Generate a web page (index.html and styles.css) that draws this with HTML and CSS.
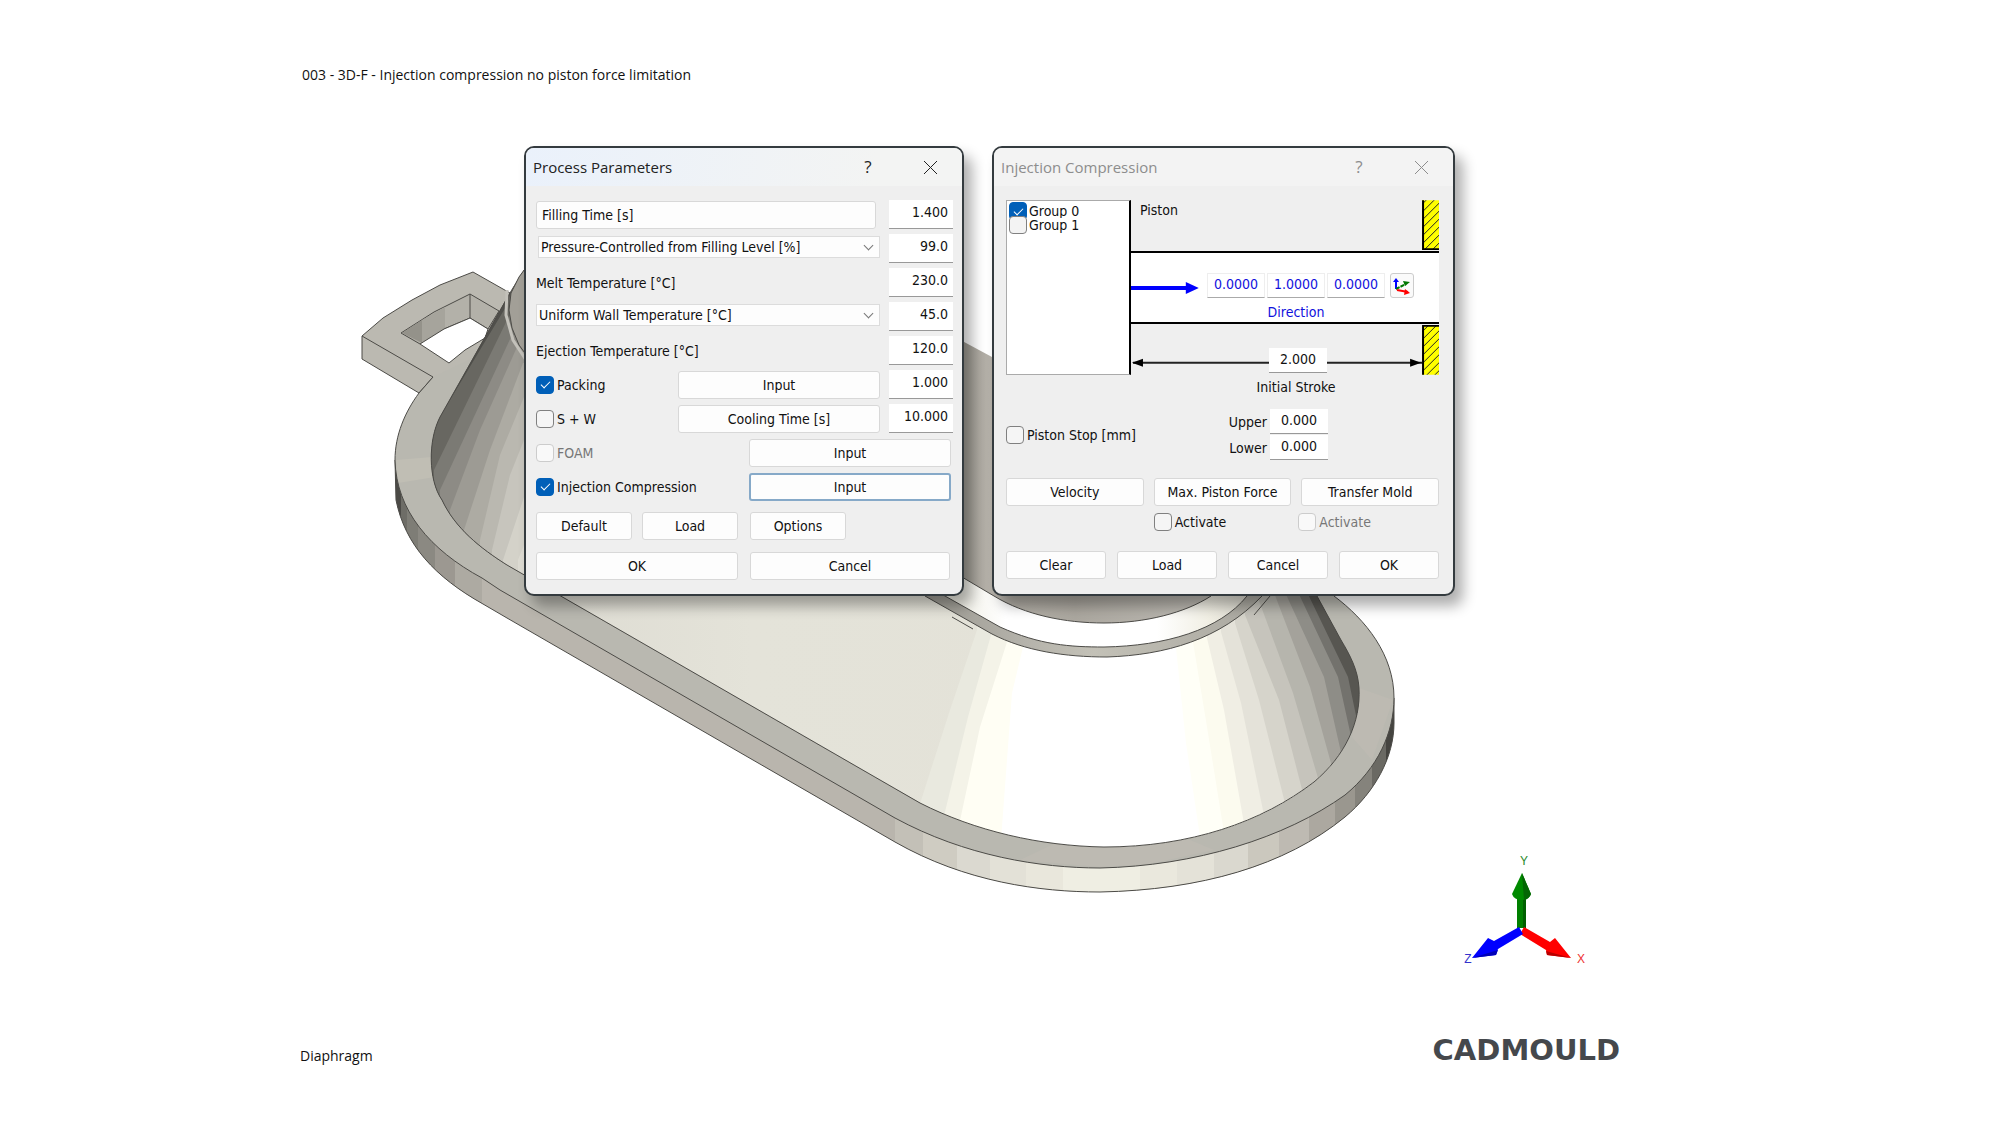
FILE: index.html
```
<!DOCTYPE html>
<html lang="en">
<head>
<meta charset="utf-8">
<meta name="viewport" content="width=device-width, initial-scale=1">
<title>Injection compression</title>
<link rel="stylesheet" href="styles.css">
</head>
<body>
<svg class="scene" viewBox="0 0 2000 1124" aria-hidden="true">
  <defs>
    <clipPath id="cone"><path d="M524 270L510 292L440 417C428 440 428 480 442 500C455 528 480 548 507 565L559 595L920 803C975 831 1040 846 1104 847C1190 847 1262 822 1314 782C1345 756 1361 722 1359 688C1358 670 1350 655 1341 640L1317 596L1200 540L900 480Z"/></clipPath>
    <clipPath id="side"><path id="side-shape" d="M395 460L396 500C405 545 435 577 483 604L507 618L895 842C965 882 1040 892 1100 892C1200 890 1285 866 1345 817C1375 792 1394 757 1394 723V698L1300 700L500 450Z"/></clipPath>
    <linearGradient id="plain" x1="0" x2="1"><stop offset="0" stop-color="#dddbd2"/><stop offset=".3" stop-color="#e4e3d9"/><stop offset="1" stop-color="#e3e1d7"/></linearGradient>
    <linearGradient id="cup" x1="0" x2="1"><stop offset="0" stop-color="#8f8c83"/><stop offset=".18" stop-color="#b5b1a9"/><stop offset=".5" stop-color="#aba79f"/><stop offset="1" stop-color="#bdbab3"/></linearGradient>
    <linearGradient id="bevel" x1="0" x2="1"><stop offset="0" stop-color="#deddd2"/><stop offset=".08" stop-color="#eeede2"/><stop offset=".25" stop-color="#fff"/><stop offset=".72" stop-color="#fff"/><stop offset=".88" stop-color="#f1efe4"/><stop offset="1" stop-color="#dcdad0"/></linearGradient>
    <linearGradient id="lip" x1="0" x2="1"><stop offset="0" stop-color="#9c9a92"/><stop offset=".3" stop-color="#b5b3ab"/><stop offset=".5" stop-color="#c3c1b7"/><stop offset="1" stop-color="#aaa8a0"/></linearGradient>
  </defs>

  <!-- eyelet -->
  <path fill="#bbb9b1" stroke="#4c4b47" d="M510 293L473 272L440 285L412 300L383 318L362 336V359L419 393L450 440L530 340Z"/>
  <path fill="none" stroke="#4c4b47" d="M362 336L433 377L419 393"/>
  <path fill="#b3b1a9" stroke="#4c4b47" d="M401 333L434 312L470 294L499 311L488 329L470 318L444 329L420 344Z"/>
  <path fill="#94928a" d="M402 333L422 320L422 343Z"/>
  <path fill="#a6a49c" d="M422 320L445 307V328L422 343Z"/>
  <path fill="none" stroke="#4c4b47" d="M470 294V318"/>
  <path fill="#fff" stroke="#4c4b47" d="M420 344L444 329L470 318L488 329L485 338L465 350L449 363Z"/>

  <!-- flange side wall -->
  <g clip-path="url(#side)">
    <rect x="390" y="440" width="1010" height="460" fill="#b9b5ad"/>
    <path fill="#4b4a46" d="M390 440H401V530H390Z"/><path fill="#6e6d67" d="M401 440H407V540H401Z"/>
    <path fill="#7e7d76" d="M407 440H418V560H407Z"/><path fill="#8b8982" d="M418 440H435V580H418Z"/>
    <path fill="#9c9891" d="M435 440H455V600H435Z"/><path fill="#adaaa2" d="M455 440H482V620H455Z"/>
    <path fill="#c3c0b7" d="M895 780H923V900H895Z"/><path fill="#cfccc2" d="M923 780H957V900H923Z"/>
    <path fill="#dbd9d0" d="M957 780H990V900H957Z"/><path fill="#e3e1d7" d="M990 780H1026V900H990Z"/>
    <path fill="#e9e7dc" d="M1026 780H1063V900H1026Z"/><path fill="#efeee3" d="M1063 780H1140V900H1063Z"/>
    <path fill="#eae8dd" d="M1140 780H1177V900H1140Z"/><path fill="#e4e2d8" d="M1177 780H1214V900H1177Z"/>
    <path fill="#dad8cf" d="M1214 780H1248V900H1214Z"/><path fill="#cbc8be" d="M1248 780H1279V900H1248Z"/>
    <path fill="#bebab2" d="M1279 760H1309V900H1279Z"/><path fill="#aca8a0" d="M1309 760H1335V900H1309Z"/>
    <path fill="#9a978f" d="M1335 740H1355V900H1335Z"/><path fill="#85837c" d="M1355 700H1372V900H1355Z"/>
    <path fill="#6a6963" d="M1372 690H1386V900H1372Z"/><path fill="#454440" d="M1386 680H1400V900H1386Z"/>
  </g>
  <use href="#side-shape" fill="none" stroke="#4c4b47"/>

  <!-- flange top face -->
  <path fill="#b9b8b0" d="M433 377L419 393C405 412 395 435 395 460C396 510 430 550 482 578L500 590L895 818C965 856 1040 868 1100 868C1195 866 1285 838 1345 795C1378 768 1394 732 1394 698C1394 655 1366 620 1334 596L1200 480L530 330Z"/>
  <path fill="#bdbab2" d="M1393 700L1359 688L1352 737L1372 760ZM1020 860L1062 840H1190L1214 850L1149 864L1100 867Z"/>
  <path fill="#c0beb4" d="M398 483L396 460L432 457L435 477Z"/>
  <path fill="none" stroke="#4c4b47" d="M433 377L419 393C405 412 395 435 395 460C396 510 430 550 482 578L500 590L895 818C965 856 1040 868 1100 868C1195 866 1285 838 1345 795C1378 768 1394 732 1394 698C1394 655 1366 620 1334 596"/>

  <!-- cone wall -->
  <g clip-path="url(#cone)">
    <rect x="420" y="260" width="960" height="600" fill="#504f4b"/>
    <path fill="#686761" d="M507 305L432 430V860H900V260H520Z"/>
    <path fill="#7b7a74" d="M509 316L434 470V860H900V300Z"/>
    <path fill="#8d8b85" d="M512 335L440 490V860H900V300Z"/>
    <path fill="#9d9b94" d="M517 347L480 430L450 510V860H900V300Z"/>
    <path fill="#adaba3" d="M523 363L490 450L464 530V860H900V320Z"/>
    <path fill="#bab8b0" d="M524 397L500 455L480 540V860H900V380Z"/>
    <path fill="#c7c5bd" d="M524 440L510 475L492 550V860H900V400Z"/>
    <path fill="#d4d2c9" d="M524 497L503 560V860H900V450Z"/>
    <path fill="url(#plain)" d="M526 540L518 560V860H1300V540Z"/>
    <path fill="#e9e9df" d="M977 600V630L949 713L918 810L960 900H1380V590Z"/>
    <path fill="#f4f3e8" d="M991 600V635L968 717L943 820L960 900H1380V590Z"/>
    <path fill="#fffef4" d="M1007 600V642L980 727L958 830L970 900H1380V590Z"/>
    <path fill="#fff" d="M1023 600V647L1012 693L1001 840V900H1380V590Z"/>
    <path fill="#fffff7" d="M1176 590V648L1186 743L1202 850H1380V590Z"/>
    <path fill="#fcfbef" d="M1193 590V642L1207 727L1226 845H1380V590Z"/>
    <path fill="#f0eee4" d="M1207 590V638L1224 710L1246 835H1380V590Z"/>
    <path fill="#e4e2d9" d="M1221 590V632L1241 703L1266 825H1380V590Z"/>
    <path fill="#d6d4cb" d="M1235 590V623L1259 700L1288 815H1380V590Z"/>
    <path fill="#c6c4bc" d="M1245 590V615L1279 700L1306 805H1380V590Z"/>
    <path fill="#b6b5ad" d="M1255 590L1293 693L1323 795H1380V590Z"/>
    <path fill="#a4a29b" d="M1273 590L1310 687L1337 785H1380V590Z"/>
    <path fill="#8e8d87" d="M1284 590L1324 677L1345 770H1380V590Z"/>
    <path fill="#73726d" d="M1297 590L1338 677L1354 750H1380V590Z"/>
    <path fill="#575651" d="M1306 590L1348 677L1359 730H1380V590Z"/>
  </g>
  <path fill="none" stroke="#4c4b47" d="M510 293L440 417C428 440 428 480 442 500C455 528 480 548 507 565L559 595L920 803C975 831 1040 846 1104 847C1190 847 1262 822 1314 782C1345 756 1361 722 1359 688C1358 670 1350 655 1341 640L1317 596"/>

  <!-- rims -->
  <path fill="#a29f97" stroke="#4c4b47" d="M530 262L519 277L511 293L509 310L512 328L519 345L530 360Z"/>
  <path fill="none" stroke="#c3c1ba" stroke-width="3" d="M507 290L506 315L513 340L526 360"/>
  <path fill="url(#lip)" stroke="#4c4b47" d="M925 596L992 634C1025 651 1065 657 1107 657C1165 655 1220 640 1262 596V560H925Z"/>
  <path fill="url(#bevel)" stroke="#4c4b47" d="M925 585L945 596L1000 627C1040 645 1070 647 1104 647C1165 646 1220 630 1247 596V560H925Z"/>
  <path fill="url(#cup)" d="M940 564L994 596C1025 615 1065 623 1104 623C1145 623 1185 613 1211 596V470L992 357L940 329Z"/>
  <path fill="none" stroke="#4c4b47" d="M940 564L994 596C1025 615 1065 623 1104 623C1145 623 1185 613 1211 596"/>
  <path fill="none" stroke="#4c4b47" d="M952 617L973 629M1254 615L1270 596"/>

  <!-- axis triad -->
  <g>
    <path fill="#008000" d="M1517 895H1526V928H1517Z"/><path fill="#005f00" d="M1523 895H1526V928H1523Z"/>
    <path fill="#008a00" d="M1522 873L1531 894Q1529 900 1522 900Q1514 900 1512 894Z"/><path fill="#046604" d="M1522 873L1531 894Q1529 899 1524 900Z"/>
    <path fill="#f00" d="M1524 927L1550 942L1555 938L1571 958L1547 955L1546 950L1520 934Z"/><path fill="#b90000" d="M1571 958L1547 955L1546 951Z"/>
    <path fill="#00f" d="M1519 927L1494 941L1488 938L1472 958L1496 955L1498 949L1523 934Z"/><path fill="#0000b8" d="M1472 958L1496 955L1498 950Z"/>
    <text class="axis axis-y" x="1524" y="865">Y</text>
    <text class="axis axis-x" x="1581" y="963">X</text>
    <text class="axis axis-z" x="1468" y="963">Z</text>
  </g>
</svg>

<header class="caption">003 - 3D-F - Injection compression no piston force limitation</header>

<main class="desktop">
  <section class="dialog process" aria-labelledby="t1">
    <header class="titlebar active">
      <h1 id="t1">Process Parameters</h1>
      <button class="tool" type="button">?</button>
      <button class="tool" type="button" aria-label="Close"><svg width="15" height="15"><path d="M1 1L14 14M14 1L1 14"/></svg></button>
    </header>
    <form class="params">
      <div class="row"><button class="btn left grow" type="button">Filling Time [s]</button><input class="num" aria-label="Filling time" value="1.400"></div>
      <div class="row"><span class="pick grow inset"><select aria-label="Control"><option>Pressure-Controlled from Filling Level [%]</option></select></span><input class="num" aria-label="Filling level" value="99.0"></div>
      <div class="row"><label class="grow" for="melt">Melt Temperature [°C]</label><input class="num" id="melt" value="230.0"></div>
      <div class="row"><span class="pick grow"><select aria-label="Wall temperature mode"><option>Uniform Wall Temperature [°C]</option></select></span><input class="num" aria-label="Wall temperature" value="45.0"></div>
      <div class="row"><label class="grow" for="eject">Ejection Temperature [°C]</label><input class="num" id="eject" value="120.0"></div>
      <div class="row"><label class="check grow"><input type="checkbox" checked>Packing</label><button class="btn wide" type="button">Input</button><input class="num" aria-label="Packing" value="1.000"></div>
      <div class="row"><label class="check grow"><input type="checkbox">S + W</label><button class="btn wide" type="button">Cooling Time [s]</button><input class="num" aria-label="Cooling time" value="10.000"></div>
      <div class="row"><label class="check grow off"><input type="checkbox" disabled>FOAM</label><button class="btn wide end" type="button">Input</button></div>
      <div class="row"><label class="check grow"><input type="checkbox" checked>Injection Compression</label><button class="btn wide end focus" type="button">Input</button></div>
      <div class="actions">
        <button class="btn" type="button">Default</button><button class="btn" type="button">Load</button><button class="btn" type="button">Options</button>
        <button class="btn two" type="button">OK</button><button class="btn two" type="button">Cancel</button>
      </div>
    </form>
  </section>

  <section class="dialog compression" aria-labelledby="t2">
    <header class="titlebar">
      <h1 id="t2">Injection Compression</h1>
      <button class="tool" type="button">?</button>
      <button class="tool" type="button" aria-label="Close"><svg width="15" height="15"><path d="M1 1L14 14M14 1L1 14"/></svg></button>
    </header>
    <form class="piston">
      <div class="top">
        <div class="groups">
          <label class="check"><input type="checkbox" checked>Group 0</label>
          <label class="check"><input type="checkbox">Group 1</label>
        </div>
        <div class="diagram">
          <svg class="drawing" viewBox="0 0 309 175" aria-hidden="true">
            <defs><pattern id="hatch" width="8" height="8" patternUnits="userSpaceOnUse"><rect width="8" height="8" fill="#ff0"/><path stroke="#222" d="M-2 2L2 -2M0 8L8 0M6 10L10 6"/></pattern></defs>
            <rect y="52" width="309" height="71" fill="#fff"/>
            <path stroke="#000" stroke-width="2" d="M0 52H309M0 123H309"/>
            <path fill="url(#hatch)" d="M292 0H309V50H292ZM292 126H309V175H292Z"/>
            <path fill="none" stroke="#000" stroke-width="2" d="M293 0V49H309M309 126H293V175"/>
            <path stroke="#00f" stroke-width="4" d="M0 88H56"/><path fill="#00f" d="M55 82V94L68 88Z"/>
            <path stroke="#222" stroke-width="2" d="M2 163H292"/><path d="M1 163L12 159V167ZM291 163L280 159V167Z"/>
          </svg>
          <div class="zone">Piston</div>
          <div class="zone direction">
            <input class="vec" aria-label="X" value="0.0000"><input class="vec" aria-label="Y" value="1.0000"><input class="vec" aria-label="Z" value="0.0000">
            <button class="axes" type="button" aria-label="Pick direction"><svg width="22" height="22"><g fill="none" stroke-width="2"><path stroke="#00f" d="M5 5V14"/><path stroke="#070" stroke-dasharray="4 1" d="M5 14L15 9"/><path stroke="#f00" d="M6 15L17 17"/></g><path fill="#00f" d="M2 7L5 3L8 7Z"/><path fill="#070" d="M12 6L19 7L14 11Z"/><path fill="#f00" d="M14 14L19 18L13 20Z"/></svg></button>
            <span class="name">Direction</span>
          </div>
          <div class="zone stroke"><input class="num mid" id="stroke" value="2.000"></div>
        </div>
      </div>
      <label class="stroke-name" for="stroke">Initial Stroke</label>
      <div class="stop">
        <label class="check"><input type="checkbox">Piston Stop [mm]</label>
        <div class="limits">
          <label for="up">Upper</label><input class="num mid" id="up" value="0.000">
          <label for="low">Lower</label><input class="num mid" id="low" value="0.000">
        </div>
      </div>
      <div class="trio">
        <button class="btn" type="button">Velocity</button><button class="btn" type="button">Max. Piston Force</button><button class="btn" type="button">Transfer Mold</button>
        <label class="check second"><input type="checkbox">Activate</label><label class="check off"><input type="checkbox" disabled>Activate</label>
      </div>
      <div class="quad">
        <button class="btn" type="button">Clear</button><button class="btn" type="button">Load</button><button class="btn" type="button">Cancel</button><button class="btn" type="button">OK</button>
      </div>
    </form>
  </section>
</main>

<footer class="foot"><span>Diaphragm</span><strong class="brand">CADMOULD</strong></footer>
</body>
</html>
```
FILE: styles.css
```
*, *::before, *::after { box-sizing: border-box; }
body {
  position: relative;
  display: flex;
  flex-direction: column;
  min-height: 100vh;
  margin: 0;
  background: #fff;
  color: #111;
  font: 14px/20px "Open Sans", sans-serif;
}
.scene { position: absolute; inset: 0; width: 100%; height: 100%; }
.axis { font: 12px "Liberation Sans", sans-serif; text-anchor: middle; }
.axis-x { fill: #e33; }
.axis-y { fill: #2a8a2a; }
.axis-z { fill: #33c; }

.caption { position: relative; padding: 65px 15% 0 302px; }
.desktop {
  position: relative;
  flex: 1;
  display: flex;
  justify-content: center;
  align-items: flex-start;
  gap: 28px;
  padding: 61px 21px 0 0;
}
.foot {
  position: relative;
  display: flex;
  justify-content: space-between;
  align-items: flex-end;
  padding: 0 19% 58px 15%;
}
.brand { color: #45484c; font: bold 29px/32px "DejaVu Sans", sans-serif; }

/* dialogs */
.dialog {
  border: 2px solid #343b3f;
  border-radius: 10px;
  background: #efefef;
  box-shadow: 8px 10px 14px rgba(0, 0, 0, .32);
  font: 14px/20px "DejaVu Sans Condensed", "DejaVu Sans", sans-serif;
  overflow: hidden;
}
.process { width: 440px; height: 450px; }
.compression { width: 463px; height: 450px; }
.titlebar {
  display: flex;
  align-items: center;
  height: 38px;
  padding: 0 1px 0 7px;
  background: #f3f3f3;
  color: #8d8d8d;
}
.titlebar.active { background: linear-gradient(100deg, #eaf1fb, #f3f4f3 80%); color: #222; }
.titlebar h1 { flex: 1; margin: 0; font: 15px/20px "Open Sans", sans-serif; }
.tool {
  width: 62px;
  padding: 0;
  border: 0;
  background: none;
  color: inherit;
  font: 17px/20px "Open Sans", sans-serif;
}
.tool svg { display: block; margin: 0 auto; fill: none; stroke: currentColor; stroke-width: 1; }

.btn {
  height: 28px;
  padding: 0;
  border: 1px solid #d8d8d8;
  border-radius: 3px;
  background: #fdfdfd;
  color: #111;
  font: inherit;
}
.btn.left { padding-left: 5px; text-align: left; }
.btn.focus { border: 2px solid #86a9c8; }
.num, .vec {
  width: 64px;
  height: 29px;
  padding: 0 5px 5px 0;
  border: 0;
  border-bottom: 1px solid #999;
  background: #fff;
  color: #111;
  font: inherit;
  text-align: right;
}
.num.mid { width: 58px; height: 25px; padding: 0 0 3px; text-align: center; }
.vec { width: 58px; height: 25px; padding: 0 0 3px; border: 1px solid #eee; border-bottom-color: #aaa; color: #11d; text-align: center; }

.check { display: flex; align-items: center; gap: 3px; }
.check input {
  appearance: none;
  flex: none;
  width: 18px;
  height: 18px;
  margin: 0;
  border: 1px solid #808080;
  border-radius: 4px;
  background: #f5f5f5;
}
.check input:checked {
  border-color: #005fb8;
  background: #005fb8;
  display: grid;
  place-items: center;
}
.check input:checked::before {
  content: "";
  width: 9px;
  height: 5px;
  margin-top: -2px;
  border: solid #fff;
  border-width: 0 0 1px 1px;
  transform: rotate(-45deg);
}
.check input:disabled { border-color: #ccc; background: #f9f9f9; }
.off { color: #777; }

.params { padding: 14px 9px 0 10px; }
.row { display: flex; align-items: center; height: 34px; padding-bottom: 5px; }
.grow { flex: 1; }
.row .num { margin-left: 9px; }
.row .btn.left { margin-right: 4px; }
.wide { width: 202px; }
.end { margin-right: 2px; }
.pick { position: relative; display: flex; height: 22px; margin-bottom: 3px; }
.pick::after {
  content: "";
  position: absolute;
  top: 6px;
  right: 8px;
  width: 7px;
  height: 7px;
  border: solid #777;
  border-width: 0 1px 1px 0;
  transform: rotate(45deg);
}
.pick select {
  appearance: none;
  width: 100%;
  padding: 0 2px;
  border: 1px solid #dcdcdc;
  background: #fdfdfd;
  color: #111;
  font: inherit;
}
.inset { margin-left: 2px; }
.actions {
  display: grid;
  grid-template-columns: 96px 96px 96px 96px;
  gap: 12px 10px;
  margin-top: 6px;
}
.two { grid-column: span 2; }
.actions .btn:nth-child(3), .actions .btn:nth-child(5) { margin-left: 2px; margin-right: -2px; }
.actions .btn:nth-child(5) { margin-right: 0; }

.piston { padding: 14px 14px 0 12px; }
.top { display: flex; }
.groups {
  width: 125px;
  height: 175px;
  padding: 1px 2px;
  border: 1px solid #aaa;
  border-right: 2px solid #000;
  background: #fff;
}
.groups .check { height: 14px; gap: 2px; }
.groups .check:first-child { height: 16px; overflow: hidden; align-items: flex-start; line-height: 18px; }
.groups .check + .check input { background: #f3f3f3; }
.diagram { position: relative; flex: 1; height: 175px; }
.drawing { position: absolute; inset: 0; width: 100%; height: 100%; }
.zone { position: relative; height: 52px; padding-left: 9px; }
.direction {
  display: flex;
  flex-wrap: wrap;
  align-content: flex-start;
  gap: 4px 2px;
  height: 71px;
  padding: 21px 0 0 76px;
  color: #11d;
}
.axes { width: 24px; height: 25px; margin-left: 3px; padding: 0; border: 1px solid #ccc; border-radius: 3px; background: #fafafa; }
.axes svg { display: block; }
.name { width: 178px; text-align: center; }
.stroke { padding: 25px 0 0 138px; }
.stroke-name { display: block; width: 120px; margin: 2px 0 0 230px; text-align: center; }
.stop { display: flex; align-items: center; justify-content: space-between; margin-top: 12px; padding-right: 111px; }
.limits { display: grid; grid-template-columns: auto 58px; align-items: center; gap: 1px 3px; }
.limits label { text-align: right; }
.trio { display: grid; grid-template-columns: repeat(3, 1fr); gap: 6px 10px; margin-top: 18px; }
.second { grid-column: 2; }
.trio .off { margin-left: -3px; }
.quad { display: grid; grid-template-columns: repeat(4, 1fr); gap: 11px; margin-top: 19px; }
```
